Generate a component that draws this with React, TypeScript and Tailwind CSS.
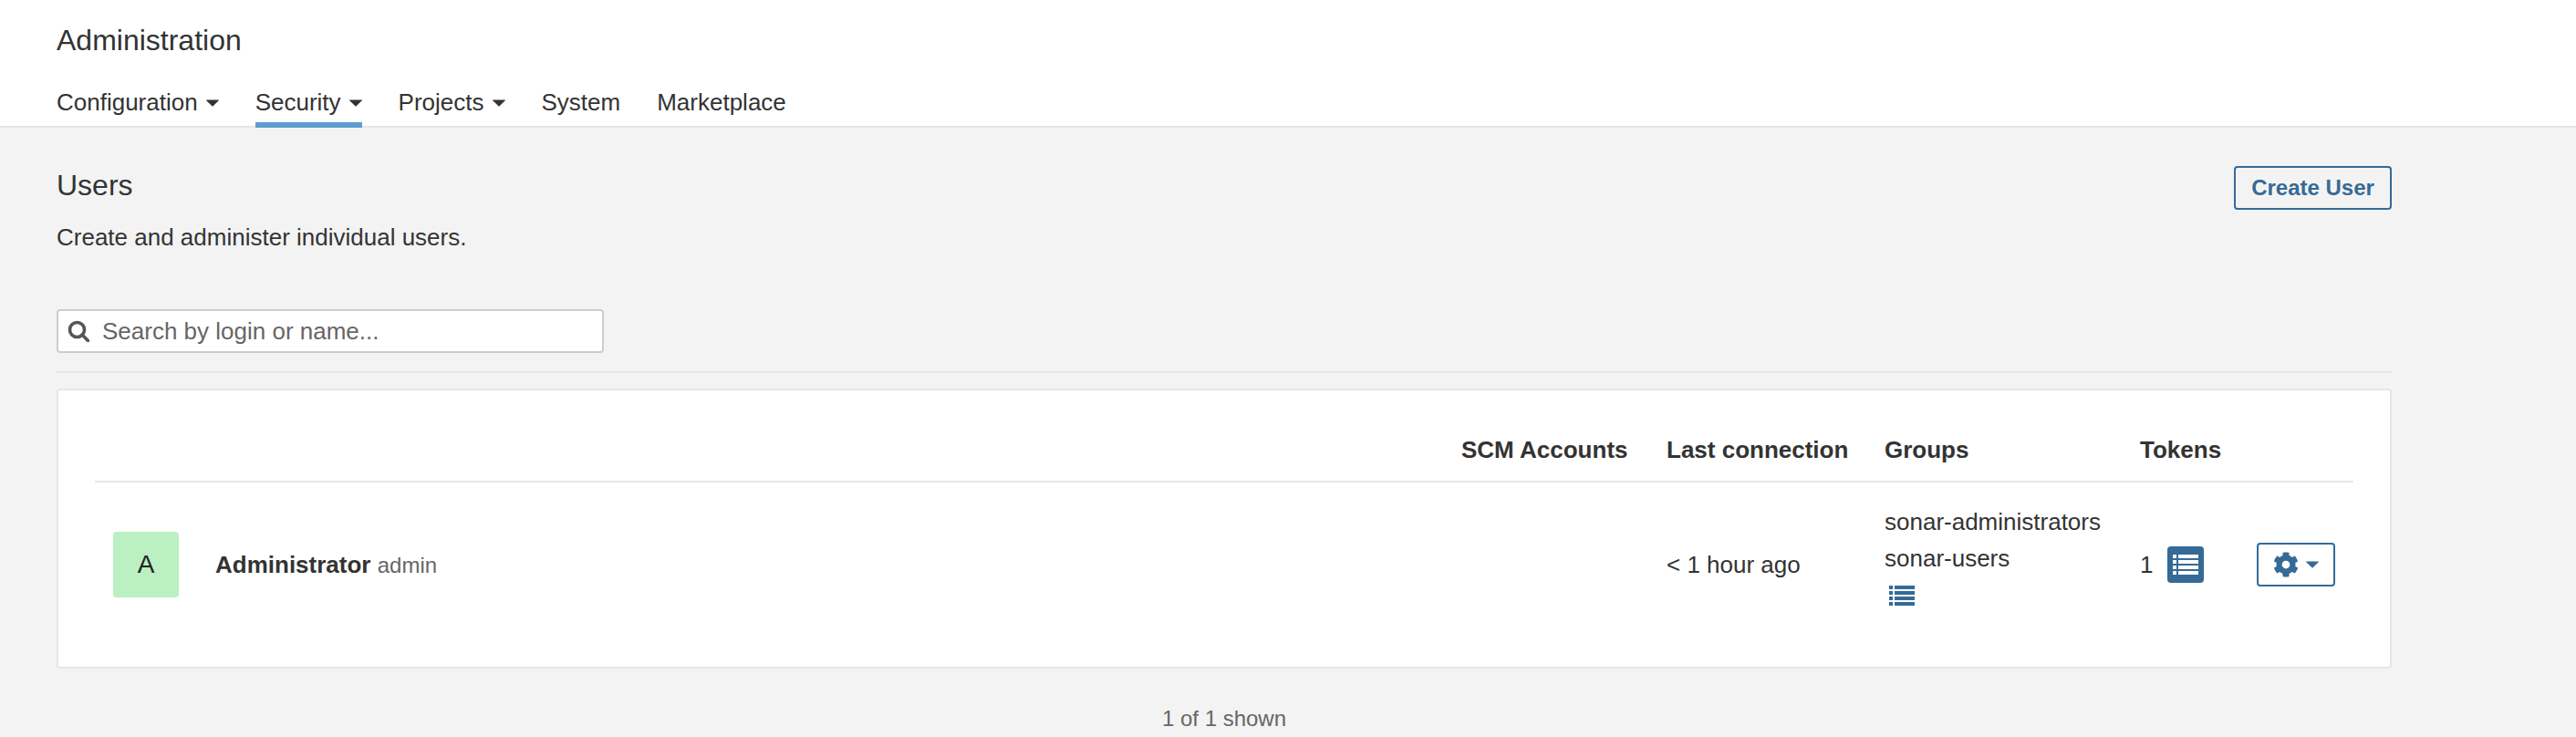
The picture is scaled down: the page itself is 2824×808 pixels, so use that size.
import { FaCog } from "react-icons/fa";

function Caret({ className }: { className: string }) {
  return (
    <svg viewBox="0 0 14 8" className={className} fill="currentColor">
      <path d="M0.5 0.5h13a.5.5 0 0 1 .3.8L7.3 7.6a.5.5 0 0 1-.6 0L.2 1.3a.5.5 0 0 1 .3-.8z" />
    </svg>
  );
}

function ListIcon({ className }: { className: string }) {
  return (
    <svg viewBox="0 0 28 22" className={className} fill="currentColor">
      <rect x="0" y="0" width="4" height="4" />
      <rect x="6" y="0" width="22" height="4" />
      <rect x="0" y="6" width="4" height="4" />
      <rect x="6" y="6" width="22" height="4" />
      <rect x="0" y="12" width="4" height="4" />
      <rect x="6" y="12" width="22" height="4" />
      <rect x="0" y="18" width="4" height="4" />
      <rect x="6" y="18" width="22" height="4" />
    </svg>
  );
}

function Tab({ label, caret, active }: { label: string; caret?: boolean; active?: boolean }) {
  return (
    <div className={active ? "flex h-[51px] items-center gap-[9px] border-b-[6px] border-[#5d9bd1]" : "flex h-[51px] items-center gap-[9px] border-b-[6px] border-transparent"}>
      <span>{label}</span>
      {caret && <Caret className="mt-[2px] h-[8px] w-[14px] text-[#333]" />}
    </div>
  );
}

export default function App() {
  return (
    <div className="h-[808px] w-[2824px] overflow-hidden bg-[#f3f3f3] font-['Liberation_Sans',Arial,sans-serif] text-[26px] text-[#333]">
      <header className="h-[140px] border-b-2 border-[#e6e6e6] bg-white px-[62px]">
        <h1 className="pt-[25px] text-[32px] leading-[38px] font-normal">Administration</h1>
        <nav className="mt-[26px] flex gap-[40px] leading-[30px]">
          <Tab label="Configuration" caret />
          <Tab label="Security" caret active />
          <Tab label="Projects" caret />
          <Tab label="System" />
          <Tab label="Marketplace" />
        </nav>
      </header>
      <main className="w-[2622px] pl-[62px]">
        <div className="flex items-start justify-between pt-[42px]">
          <div className="mt-[2px]">
            <h2 className="text-[32px] leading-[38px] font-normal">Users</h2>
            <p className="mt-[20px] leading-[36px]">Create and administer individual users.</p>
          </div>
          <button className="h-[48px] w-[173px] rounded-[4px] border-2 border-[#366a96] text-[24px] font-bold text-[#366a96]">Create User</button>
        </div>
        <div className="mt-[61px] flex h-[70px] items-start border-b-2 border-[#e6e6e6] pb-[19px]">
          <div className="flex h-[48px] w-[600px] items-center gap-[14px] rounded-[4px] border-2 border-[#cdcdcd] bg-white pl-[10px] text-[#666]">
            <svg viewBox="0 0 24 24" className="h-[24px] w-[24px] text-[#555]" fill="none" stroke="currentColor" strokeWidth="3.6">
              <circle cx="10.5" cy="10.5" r="8" />
              <path d="M16 16l6.5 6.5" strokeLinecap="round" />
            </svg>
            <span>Search by login or name...</span>
          </div>
        </div>
        <section className="mt-[17px] h-[307px] rounded-[4px] border-2 border-[#e6e6e6] bg-white px-[40px]">
          <div className="grid h-[101px] grid-cols-[1498px_225px_239px_280px_234px] items-center border-b-2 border-[#e6e6e6] pt-[32px] font-bold">
            <div />
            <div>SCM Accounts</div>
            <div>Last connection</div>
            <div>Groups</div>
            <div>Tokens</div>
          </div>
          <div className="grid grid-cols-[1498px_225px_239px_280px_234px] items-center pt-[23px]">
            <div className="flex items-center gap-[40px] pl-[20px]">
              <div className="flex h-[72px] w-[72px] items-center justify-center rounded-[4px] bg-[#bbf0c2] text-[28px] text-[#222]">A</div>
              <div><span className="font-bold">Administrator</span> <span className="text-[24px] text-[#666]">admin</span></div>
            </div>
            <div />
            <div>&lt; 1 hour ago</div>
            <div className="pb-[12px] leading-[40px]">
              <div>sonar-administrators</div>
              <div>sonar-users</div>
              <div className="flex h-[42px] items-center pl-[5px]"><ListIcon className="h-[22px] w-[28px] text-[#366a96]" /></div>
            </div>
            <div className="flex items-center">
              <span className="w-[30px]">1</span>
              <button className="flex h-[40px] w-[40px] items-center justify-center rounded-[4px] bg-[#366a96] text-white"><ListIcon className="h-[22px] w-[28px]" /></button>
              <button className="ml-[58px] flex h-[48px] w-[86px] items-center justify-center gap-[8px] rounded-[4px] border-2 border-[#366a96] text-[#366a96]"><FaCog className="h-[28px] w-[28px]" /><Caret className="h-[8px] w-[14px]" /></button>
            </div>
          </div>
        </section>
        <p className="pt-[41px] text-center text-[24px] leading-[28px] text-[#666]">1 of 1 shown</p>
      </main>
    </div>
  );
}
